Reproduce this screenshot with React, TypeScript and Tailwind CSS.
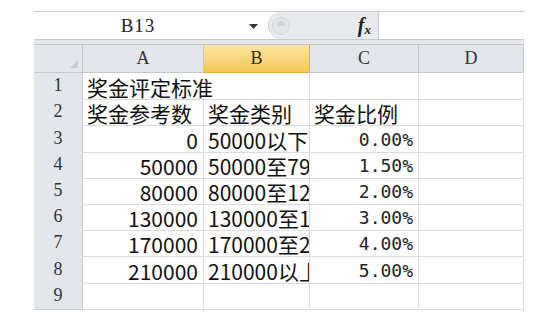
import React from "react";

const rowHeights = [26, 27, 26, 26, 26, 26, 27, 26, 26];

type Cell = { t: string; align?: "l" | "r"; kind?: "cjk" | "num" | "pct"; overflow?: boolean };

const rows: Cell[][] = [
  [{ t: "奖金评定标准", overflow: true }, { t: "" }, { t: "" }, { t: "" }],
  [{ t: "奖金参考数" }, { t: "奖金类别" }, { t: "奖金比例" }, { t: "" }],
  [{ t: "0", align: "r" }, { t: "50000以下" }, { t: "0.00%", align: "r", kind: "pct" }, { t: "" }],
  [{ t: "50000", align: "r" }, { t: "50000至79" }, { t: "1.50%", align: "r", kind: "pct" }, { t: "" }],
  [{ t: "80000", align: "r" }, { t: "80000至12" }, { t: "2.00%", align: "r", kind: "pct" }, { t: "" }],
  [{ t: "130000", align: "r" }, { t: "130000至1" }, { t: "3.00%", align: "r", kind: "pct" }, { t: "" }],
  [{ t: "170000", align: "r" }, { t: "170000至2" }, { t: "4.00%", align: "r", kind: "pct" }, { t: "" }],
  [{ t: "210000", align: "r" }, { t: "210000以上" }, { t: "5.00%", align: "r", kind: "pct" }, { t: "" }],
  [{ t: "" }, { t: "" }, { t: "" }, { t: "" }],
];

const cjk = "font-['Noto_Sans_CJK_SC',sans-serif]";
const serif = "font-['Liberation_Serif','Noto_Sans_CJK_SC',serif]";

export default function App() {
  return (
    <div className="w-[552px] h-[330px] bg-white pt-[11px] pl-[34px] overflow-hidden">
      <div className="w-[490px]">
        {/* formula bar */}
        <div className="flex h-[29px] border-t border-b border-[#c6cad0] bg-white">
          <div className="relative w-[234px] flex items-center justify-center bg-white">
            <span className={`${serif} text-[19px] text-[#222] leading-none pr-[26px] tracking-[1px]`}>B13</span>
            <svg className="absolute left-[215px] top-[12px]" width="9" height="5" viewBox="0 0 9 5">
              <path d="M0 0 L9 0 L4.5 5 Z" fill="#333" />
            </svg>
          </div>
          <div className="w-[110px] flex items-center bg-[#e8eaed] rounded-l-full border-l border-[#c9cdd2] relative">
            <div className="ml-[3px] w-[18px] h-[18px] rounded-full bg-[#e3e5e8] border border-[#d3d6da] flex items-center justify-center">
              <div className="w-[8px] h-[5px] rounded-t-full bg-[#d0d3d7] -mt-[4px]" />
            </div>
            <span className="ml-auto mr-[7px] font-['Liberation_Serif',serif] italic font-bold text-[#222] text-[20px] leading-none">
              f<span className="text-[13px] align-[-2px]">x</span>
            </span>
          </div>
          <div className="flex-1 bg-white border-l border-[#c6cad0]" />
        </div>
        {/* strip */}
        <div className="h-[5px] bg-[#e4e6e9] border-b border-[#c3c7cd]" />
        {/* header row */}
        <div className="grid grid-cols-[49px_121px_106px_109px_105px] h-[27px]">
          <div className="relative bg-[#e3e6ea] border-r border-b border-[#c3c8ce]">
            <svg className="absolute right-[4px] bottom-[4px]" width="8" height="8" viewBox="0 0 8 8">
              <path d="M8 0 L8 8 L0 8 Z" fill="#c8cbd0" />
            </svg>
          </div>
          <div className={`bg-[#e3e6ea] border-r border-b border-[#c3c8ce] flex items-center justify-center ${serif} text-[18px] text-[#333]`}>A</div>
          <div className={`bg-gradient-to-b from-[#fbe49c] to-[#f5c85a] border-r border-b border-[#dcae48] flex items-center justify-center ${serif} text-[18px] text-[#3a2c0a]`}>B</div>
          <div className={`bg-[#e3e6ea] border-r border-b border-[#c3c8ce] flex items-center justify-center ${serif} text-[18px] text-[#333]`}>C</div>
          <div className={`bg-[#e3e6ea] border-r border-b border-[#c3c8ce] flex items-center justify-center ${serif} text-[18px] text-[#333]`}>D</div>
        </div>
        {rows.map((r, i) => (
          <div
            key={i}
            className="grid grid-cols-[49px_121px_106px_109px_105px]"
            style={{ height: rowHeights[i] }}
          >
            <div className={`bg-[#e3e6ea] border-r border-b border-[#c8ccd2] flex items-center justify-center ${serif} text-[18px] text-[#333]`}>
              {i + 1}
            </div>
            {r.map((c, j) => {
              const noRight = c.overflow;
              const font =
                c.kind === "pct"
                  ? "font-['DejaVu_Sans_Mono',monospace] text-[18px] text-[#222]"
                  : `${cjk} text-[21px] text-[#111]`;
              return (
                <div
                  key={j}
                  className={`relative flex items-center border-b border-[#dadcdf] ${
                    noRight ? "" : "border-r"
                  } ${c.overflow ? "overflow-visible z-10" : "overflow-x-clip"} ${
                    c.align === "r" ? "justify-end pr-[5px]" : "justify-start pl-[4px]"
                  } whitespace-nowrap`}
                >
                  <span className={`${font} leading-[24px] pt-[2px]`}>{c.t}</span>
                </div>
              );
            })}
          </div>
        ))}
      </div>
    </div>
  );
}
